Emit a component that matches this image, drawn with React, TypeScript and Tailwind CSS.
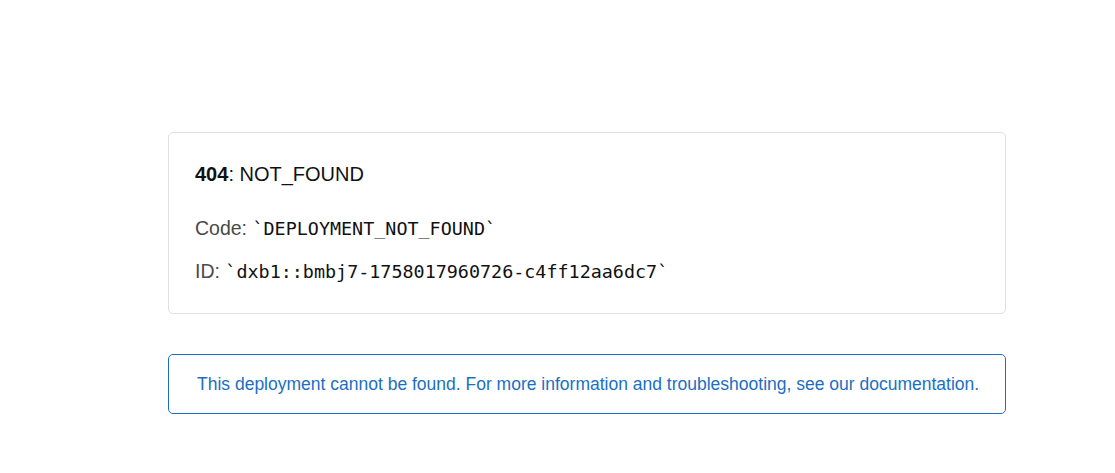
export default function App() {
  return (
    <div className="min-h-[473px] w-full bg-white pt-[132px] font-['Liberation_Sans',Arial,sans-serif]">
      <div className="ml-[168px] w-[838px]">
        <div className="rounded-[5px] border border-[#e0e0e0] px-[26px] pt-[28px] pb-[28px]">
          <p className="text-[20px] leading-[26px] text-[#111]">
            <span className="font-bold">404</span>: NOT_FOUND
          </p>
          <p className="mt-[28px] text-[19.5px] leading-[26px] text-[#4a4a4a]">
            Code: <code className="font-['DejaVu_Sans_Mono',monospace] text-[18.4px] text-[#111]">`DEPLOYMENT_NOT_FOUND`</code>
          </p>
          <p className="mt-[16px] text-[19.5px] leading-[26px] text-[#4a4a4a]">
            ID: <code className="font-['DejaVu_Sans_Mono',monospace] text-[18.4px] text-[#111]">`dxb1::bmbj7-1758017960726-c4ff12aa6dc7`</code>
          </p>
        </div>
        <div className="mt-[40px] flex h-[60px] items-center rounded-[5px] border border-[#1a6fc4] pl-[28px] pr-[8px]">
          <p className="whitespace-nowrap text-[17.5px] text-[#1a6fc4]">
            This deployment cannot be found. For more information and troubleshooting, see our documentation.
          </p>
        </div>
      </div>
    </div>
  );
}
